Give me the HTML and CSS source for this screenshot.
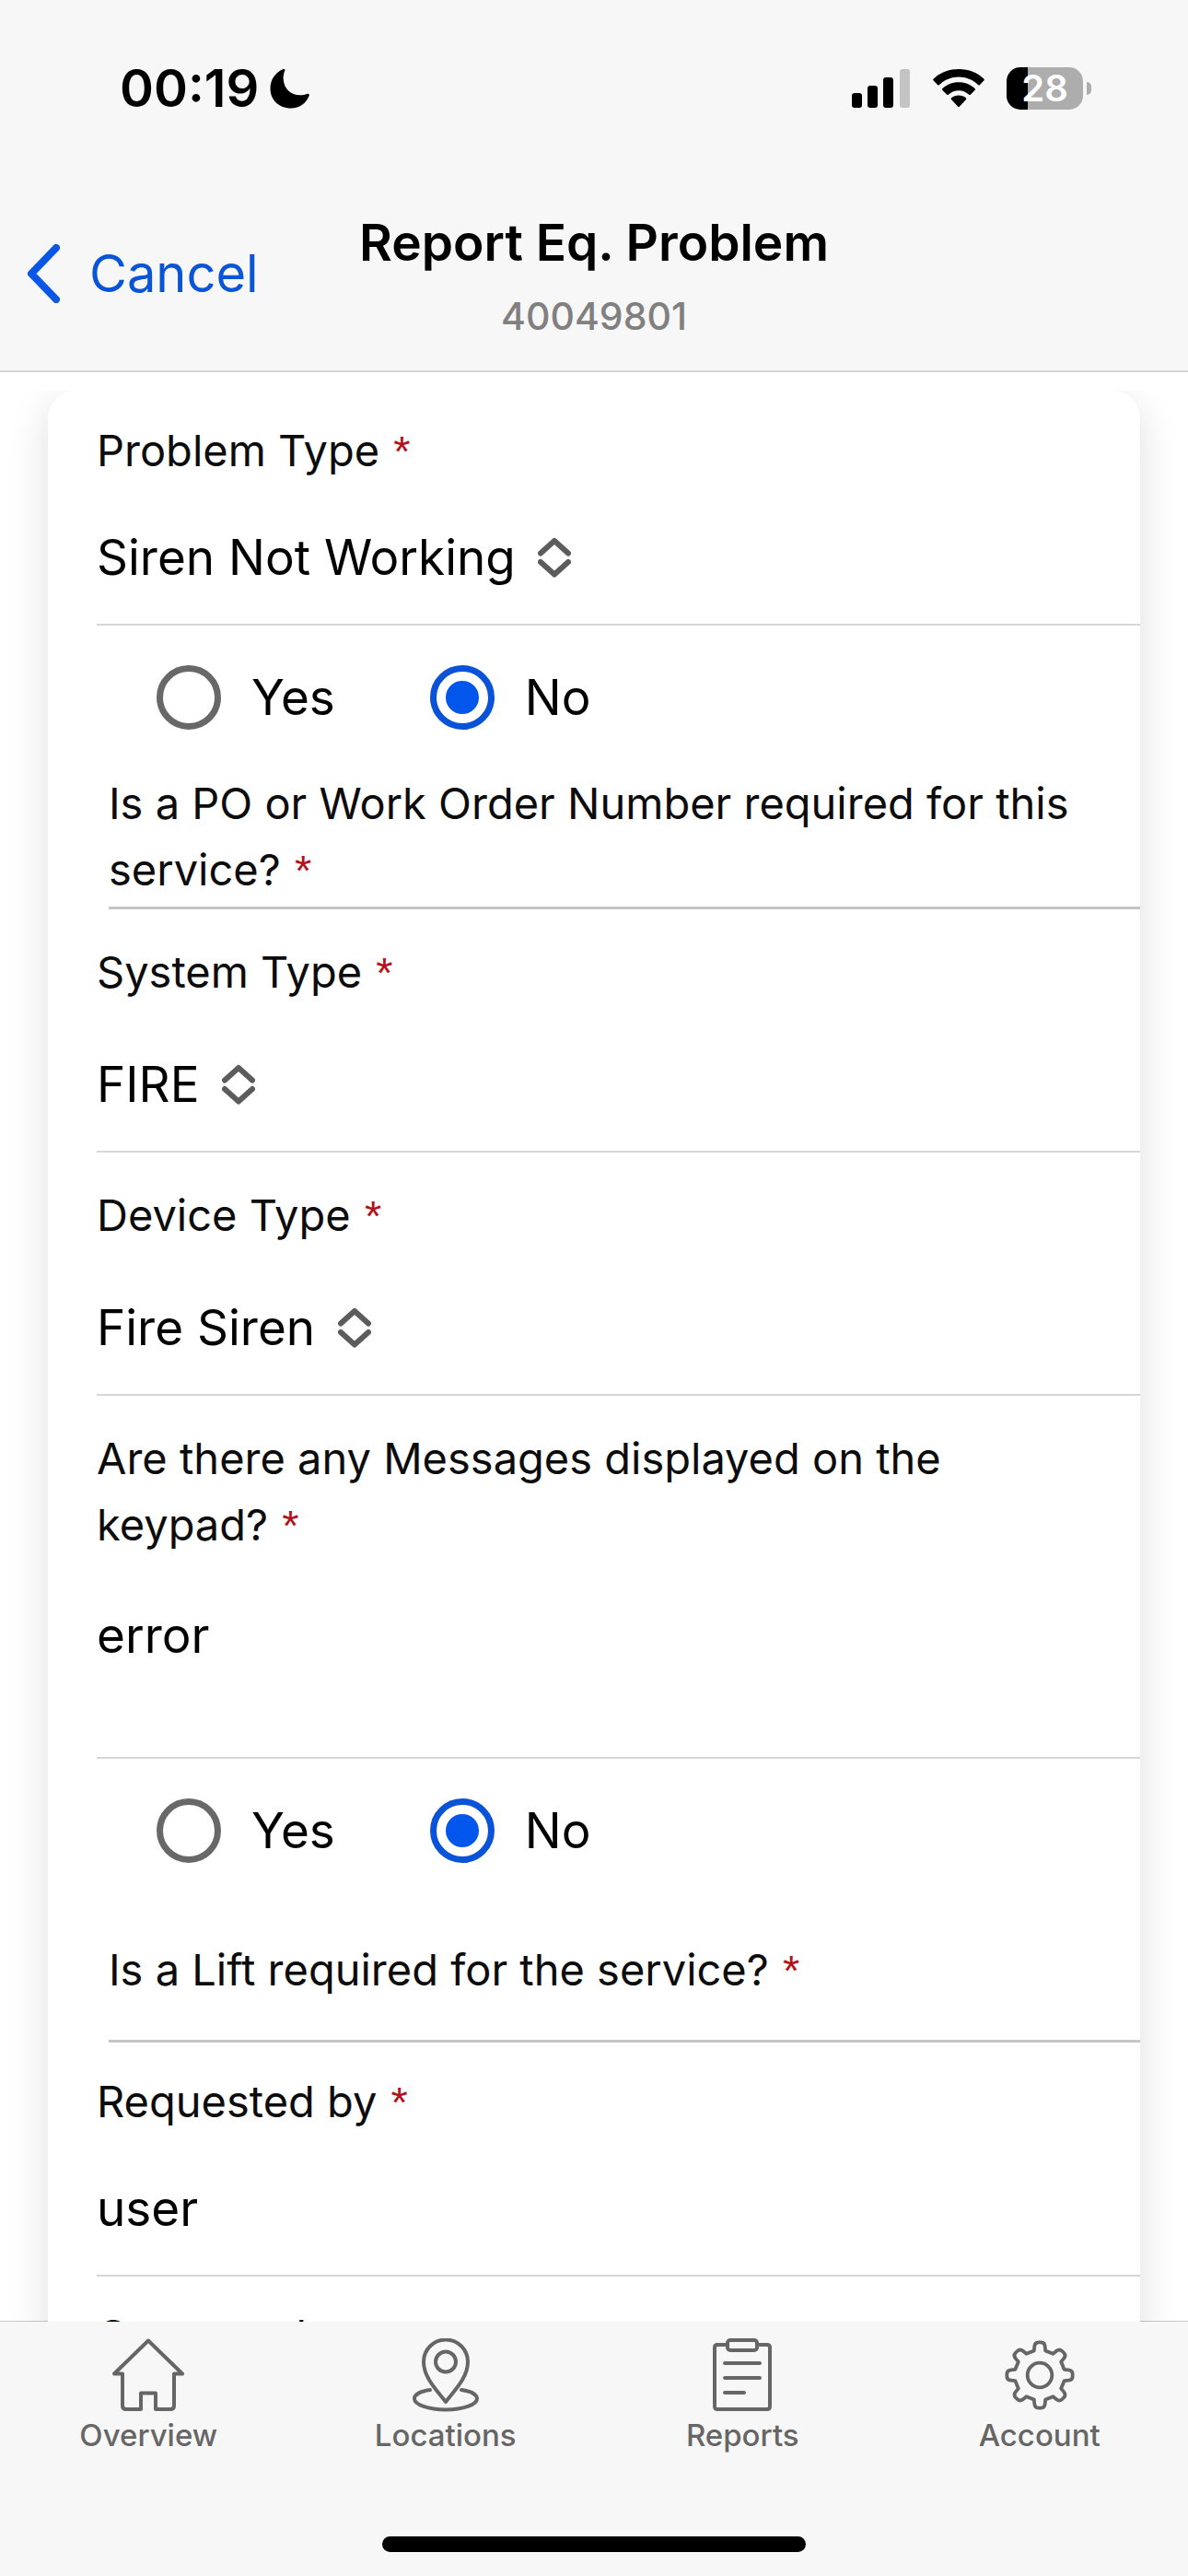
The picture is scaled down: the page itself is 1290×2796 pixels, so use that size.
FILE: index.html
```
<!DOCTYPE html>
<html lang="en">
<head>
<meta charset="utf-8">
<meta name="viewport" content="width=device-width, initial-scale=1">
<title>Report Eq. Problem</title>
<link rel="stylesheet" href="styles.css">
</head>
<body class="app">
<header class="header">
  <div class="status">
    <div class="status-group">
      <span class="clock">00:19</span>
      <svg class="moon" viewBox="0 0 44 44" aria-hidden="true"><path d="M14.500 1c1-.5 2.300.4 1.800 1.700C14.800 6 14.500 9 14.700 12c.8 10.500 8 17.300 18 17.300 3 0 5.500-.5 8-1.500 1.400-.5 2.600.7 2 2C39.500 38.500 32 43.500 23 43.500 10 43.500.5 34.500.5 22 .5 12.500 6 4.500 14.500 1Z"/></svg>
    </div>
    <div class="status-group status-icons">
      <svg class="signal" viewBox="0 0 64 42" aria-hidden="true"><rect y="26" width="11" height="16" rx="3"/><rect x="17" y="18" width="11" height="24" rx="3"/><rect x="34" y="9" width="11" height="33" rx="3"/><rect class="off" x="52" width="11" height="42" rx="3"/></svg>
      <svg class="wifi" viewBox="0 0 56 42" aria-hidden="true"><path d="M28 0C39 0 48.500 4 55.300 10.500q1 1 0 2L51 17q-1 1-2 0C43 11.500 36 8.600 28 8.600S13 11.500 7 17q-1 1-2 0L.7 12.500q-1-1 0-2C7.500 4 17 0 28 0Z"/><path d="M28 14.300c7 0 13 2.600 17.500 6.700q1.100 1 0 2L41 27.500q-1 1-2.100 0C35.700 24.800 32 23.300 28 23.300s-7.700 1.500-10.900 4.200q-1.100 1-2.100 0L10.500 23q-1.100-1 0-2C15 16.900 21 14.300 28 14.300Z"/><path d="M28 28.500c3 0 5.700 1 7.900 2.700q1.100.9.100 1.900l-7 7.500q-1 1-2 0l-7-7.500q-1-1 .1-1.900C22.300 29.500 25 28.500 28 28.500Z"/></svg>
      <div class="battery"><span class="battery-level">28</span><i class="battery-tip"></i></div>
    </div>
  </div>
  <div class="nav">
    <button type="button" class="cancel">
      <svg class="back" viewBox="0 0 36 64" aria-hidden="true"><path d="M32 4 5 32l27 28"/></svg>
      Cancel
    </button>
    <div class="heading">
      <h1 class="title">Report Eq. Problem</h1>
      <p class="subtitle">40049801</p>
    </div>
  </div>
</header>

<main class="content">
  <form class="card">
    <div class="field field-compact">
      <label class="label" for="problem">Problem Type <span class="req">*</span></label>
      <div class="picker">
        <select id="problem" class="value"><option>Siren Not Working</option></select>
        <svg class="updown" viewBox="0 0 36 44" aria-hidden="true"><path d="M3 17.500 18 4l15 13.500M3 27l15 13.500L33 27"/></svg>
      </div>
    </div>

    <fieldset class="choice">
      <div class="options">
        <label class="option"><input class="radio" type="radio" name="po">Yes</label>
        <label class="option"><input class="radio" type="radio" name="po" checked>No</label>
      </div>
      <p class="label question">Is a PO or Work Order Number required for this service? <span class="req">*</span></p>
    </fieldset>

    <div class="field">
      <label class="label" for="system">System Type <span class="req">*</span></label>
      <div class="picker">
        <select id="system" class="value"><option>FIRE</option></select>
        <svg class="updown" viewBox="0 0 36 44" aria-hidden="true"><path d="M3 17.500 18 4l15 13.500M3 27l15 13.500L33 27"/></svg>
      </div>
    </div>

    <div class="field">
      <label class="label" for="device">Device Type <span class="req">*</span></label>
      <div class="picker">
        <select id="device" class="value"><option>Fire Siren</option></select>
        <svg class="updown" viewBox="0 0 36 44" aria-hidden="true"><path d="M3 17.500 18 4l15 13.500M3 27l15 13.500L33 27"/></svg>
      </div>
    </div>

    <div class="field field-memo">
      <label class="label" for="messages">Are there any Messages displayed on the keypad? <span class="req">*</span></label>
      <textarea id="messages" class="value memo">error</textarea>
    </div>

    <fieldset class="choice choice-roomy">
      <div class="options">
        <label class="option"><input class="radio" type="radio" name="lift">Yes</label>
        <label class="option"><input class="radio" type="radio" name="lift" checked>No</label>
      </div>
      <p class="label question">Is a Lift required for the service? <span class="req">*</span></p>
    </fieldset>

    <div class="field field-compact">
      <label class="label" for="requester">Requested by <span class="req">*</span></label>
      <input id="requester" class="value" type="text" value="user">
    </div>

    <div class="field field-compact">
      <label class="label" for="phone">Contact phone <span class="req">*</span></label>
      <input id="phone" class="value" type="tel">
    </div>
  </form>
</main>

<footer class="tabbar">
  <nav class="tabs">
    <a class="tab" href="#overview">
      <svg class="tab-icon" viewBox="0 0 80 80" aria-hidden="true"><path d="M40 2.500 77 38.500H68V73q0 4-4 4H48V59.500H32V77H16q-4 0-4-4V38.500H3Z"/></svg>
      Overview
    </a>
    <a class="tab" href="#locations">
      <svg class="tab-icon" viewBox="0 0 80 80" aria-hidden="true"><path d="M40 69C31 57 16 43 16 25.500a24 24 0 0 1 48 0C64 43 49 57 40 69Z"/><circle cx="40" cy="25.500" r="11"/><path d="M23 56C12.500 57.500 6 61 6 65.500 6 72 21 77.500 40 77.500S74 72 74 65.500C74 61 67.500 57.500 57 56"/></svg>
      Locations
    </a>
    <a class="tab" href="#reports">
      <svg class="tab-icon" viewBox="0 0 80 80" aria-hidden="true"><path d="M24 7H13q-3 0-3 3v64q0 3 3 3h54q3 0 3-3V10q0-3-3-3H56"/><rect x="24" y="2" width="32" height="11" rx="3"/><path d="M21 27h38M21 43h38M21 59h21"/></svg>
      Reports
    </a>
    <a class="tab" href="#account">
      <svg class="tab-icon" viewBox="0 0 80 80" aria-hidden="true"><g transform="translate(40 40) scale(.95)"><path d="M-6.500-28-6-33Q-5.500-37.500-1.500-37.500H1.500Q5.500-37.500 6-33L6.500-28 15.200-24.400 19.100-27.600Q22.600-30.400 25.500-27.600L27.600-25.500Q30.400-22.600 27.600-19.100L24.400-15.200 28-6.500 33-6Q37.500-5.500 37.500-1.500V1.500Q37.500 5.500 33 6L28 6.500 24.400 15.200 27.600 19.100Q30.400 22.600 27.600 25.500L25.500 27.600Q22.600 30.400 19.100 27.600L15.200 24.400 6.500 28 6 33Q5.500 37.500 1.500 37.500H-1.500Q-5.500 37.500-6 33L-6.500 28-15.200 24.400-19.100 27.600Q-22.600 30.400-25.500 27.600L-27.600 25.500Q-30.400 22.600-27.600 19.100L-24.400 15.200-28 6.500-33 6Q-37.500 5.500-37.500 1.500V-1.500Q-37.500-5.500-33-6L-28-6.500-24.400-15.200-27.600-19.100Q-30.400-22.600-27.600-25.500L-25.500-27.600Q-22.600-30.400-19.100-27.600L-15.200-24.400Z"/><circle r="14"/></g></svg>
      Account
    </a>
  </nav>
  <div class="home-bar"></div>
</footer>
</body>
</html>
```
FILE: styles.css
```
*, *::before, *::after { box-sizing: border-box; }

body, h1, p, fieldset, button, input, textarea, select { margin: 0; }

.app {
  display: flex;
  flex-direction: column;
  height: 100vh;
  overflow: hidden;
  background: #fff;
  color: #000;
  font-family: Inter, "Liberation Sans", sans-serif;
}

/* Status bar and title */
.header {
  flex: none;
  padding-top: 60px;
  padding-bottom: 35px;
  background: #f7f7f7;
  border-bottom: 2px solid #d4d4d4;
}

.status {
  display: flex;
  justify-content: space-between;
  align-items: center;
  height: 72px;
  padding: 0 105px 0 130px;
}

.status-group { display: flex; align-items: center; gap: 12px; }
.status-icons { gap: 24px; }
.clock { font-size: 56px; font-weight: 600; line-height: 72px; }
.moon { width: 44px; height: 44px; }
.signal { width: 64px; height: 42px; }
.signal .off { fill: #c4c4c4; }
.wifi { width: 56px; height: 42px; }

.battery { display: flex; align-items: center; gap: 4px; }

.battery-level {
  width: 83px;
  border-radius: 15px;
  background: linear-gradient(to right, #000 28%, #adadad 28%);
  color: #fff;
  font-size: 40px;
  font-weight: 600;
  line-height: 46px;
  text-align: center;
}

.battery-tip {
  width: 5px;
  height: 14px;
  border-radius: 0 5px 5px 0;
  background: #adadad;
}

.nav {
  display: grid;
  grid-template-columns: 1fr auto 1fr;
  align-items: center;
  margin-top: 95px;
}

.cancel {
  display: flex;
  align-items: center;
  justify-self: start;
  gap: 32px;
  padding: 0 0 0 29px;
  border: 0;
  background: none;
  color: #0a54d6;
  font: 400 56px/72px Inter, "Liberation Sans", sans-serif;
}

.back {
  width: 36px;
  height: 64px;
  fill: none;
  stroke: #0a56e6;
  stroke-width: 8;
  stroke-linecap: round;
  stroke-linejoin: round;
}

.heading { text-align: center; }
.title { font-size: 55px; font-weight: 600; line-height: 72px; }
.subtitle { margin-top: 20px; color: #808080; font-size: 41px; font-weight: 500; line-height: 48px; }

/* Form card; it covers the tab bar's top rule */
.content {
  position: relative;
  z-index: 1;
  flex: 1;
  min-height: 0;
  margin: 20px 0 -1px;
  padding: 0 52px;
  overflow: hidden;
}

.card {
  padding: 1px 0 0 53px;
  background: #fff;
  border-radius: 30px;
  box-shadow: 0 12px 44px rgba(0, 0, 0, .13);
}

.field {
  display: flex;
  flex-direction: column;
  align-items: flex-start;
  gap: 50px;
  padding: 32px 0 36px;
  border-bottom: 2px solid #d6d6d6;
}

.field-compact { gap: 44px; padding-top: 28px; }
.field-memo { gap: 48px; padding-bottom: 0; }

.label {
  max-width: 1080px;
  color: #0c0c0c;
  font-size: 47px;
  line-height: 72px;
}

.req {
  margin-left: 2px;
  color: #b3121d;
  font-family: "Liberation Sans", sans-serif;
  line-height: 1;
}

.value {
  height: 72px;
  padding: 0;
  border: 0;
  outline: 0;
  background: none;
  color: #000;
  font: 400 53px/72px Inter, "Liberation Sans", sans-serif;
  appearance: none;
}

input.value, .memo { width: 100%; }
.memo { height: 168px; resize: none; }
.field-memo .label { max-width: 1000px; }

.picker { display: flex; align-items: center; gap: 24px; }

.updown {
  width: 36px;
  height: 44px;
  fill: none;
  stroke: #5c5c5c;
  stroke-width: 6;
  stroke-linecap: round;
  stroke-linejoin: round;
  pointer-events: none;
}

.choice {
  display: flex;
  flex-direction: column;
  gap: 43px;
  min-width: 0;
  margin-left: 13px;
  padding: 42px 0 4px;
  border: 0;
  border-bottom: 3px solid #c6c6c6;
}

.choice-roomy { gap: 79px; padding-bottom: 40px; }

.options { display: flex; gap: 103px; padding-left: 52px; }

.option {
  display: flex;
  align-items: center;
  gap: 33px;
  font-size: 53px;
  line-height: 72px;
}

.radio {
  display: grid;
  place-content: center;
  width: 70px;
  height: 70px;
  margin: 0;
  border: 7px solid #686868;
  border-radius: 50%;
  appearance: none;
}

.radio:checked { border-color: #0a53d8; }

.radio:checked::before {
  content: "";
  width: 36px;
  height: 36px;
  border-radius: 50%;
  background: #0356ec;
}

/* Bottom navigation */
.tabbar {
  flex: none;
  padding: 18px 0 26px;
  background: #f7f7f7;
  border-top: 1px solid #c8c8c8;
}

.tabs { display: grid; grid-template-columns: repeat(4, 1fr); }

.tab {
  display: flex;
  flex-direction: column;
  align-items: center;
  gap: 3px;
  color: #666;
  font-size: 33px;
  font-weight: 500;
  line-height: 44px;
  text-decoration: none;
}

.tab-icon {
  width: 80px;
  height: 80px;
  fill: none;
  stroke: #666;
  stroke-width: 4;
  stroke-linecap: round;
  stroke-linejoin: round;
}

.home-bar {
  width: 460px;
  height: 17px;
  margin: 88px auto 0;
  border-radius: 9px;
  background: #000;
}
```
